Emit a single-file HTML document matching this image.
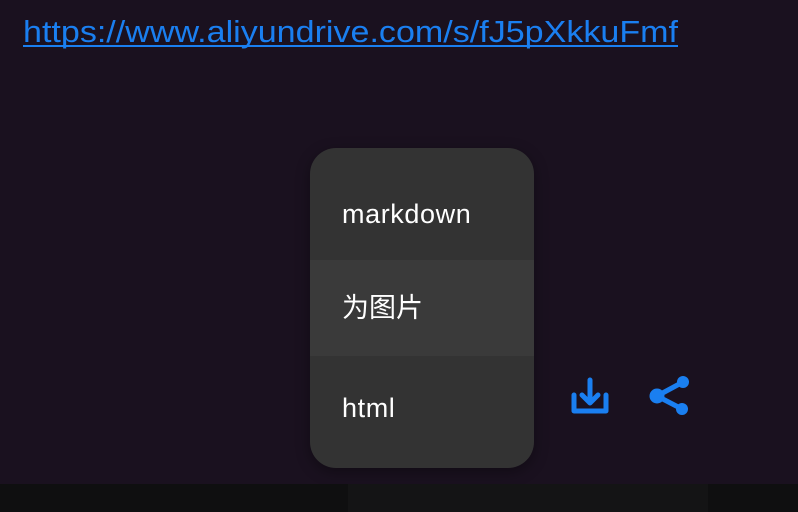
<!DOCTYPE html>
<html><head><meta charset="utf-8"><style>
html,body{margin:0;padding:0}
body{width:798px;height:512px;background:#1a111f;position:relative;overflow:hidden;font-family:"Liberation Sans","Noto Sans CJK SC",sans-serif}
.bar{position:absolute;left:0;top:484px;width:798px;height:28px;background:#0f0f10}
.bar2{position:absolute;left:348px;top:484px;width:360px;height:28px;background:#141415}
.menu{position:absolute;left:310px;top:148px;width:224px;height:320px;background:#333333;border-radius:26px;overflow:hidden;box-shadow:0 4px 14px rgba(0,0,0,.35)}
.item{height:96px;line-height:96px;padding-left:32px;color:#fff;font-size:27px;letter-spacing:0.6px}
.m1{height:112px;line-height:132px}
.m2{background:#3a3a3a;letter-spacing:0}
</style></head><body>
<svg style="position:absolute;left:0;top:0" width="798" height="60">
<text x="23" y="42" font-family="Liberation Sans" font-size="31" fill="#1a7ff0" textLength="655" lengthAdjust="spacingAndGlyphs">https://www.aliyundrive.com/s/fJ5pXkkuFmf</text>
<rect x="23" y="45" width="655" height="2" fill="#1a7ff0"/>
</svg>
<div class="menu">
<div class="item m1">markdown</div>
<div class="item m2">为图片</div>
<div class="item" style="line-height:104px">html</div>
</div>
<svg style="position:absolute;left:560px;top:365px" width="140" height="60" viewBox="0 0 140 60">
<g fill="none" stroke="#1a7ff0" stroke-width="5" stroke-linecap="round" stroke-linejoin="round">
<path d="M14 30 V46 H46 V30"/>
<path d="M30 15 V37 M22 30 L30 38 L38 30"/>
<path d="M123 17 L97 31 L122 44"/>
</g>
<g fill="#1a7ff0"><circle cx="123" cy="17" r="6"/><circle cx="97" cy="31" r="7.5"/><circle cx="122" cy="44" r="6"/></g>
</svg>
<div class="bar"></div><div class="bar2"></div>
</body></html>
